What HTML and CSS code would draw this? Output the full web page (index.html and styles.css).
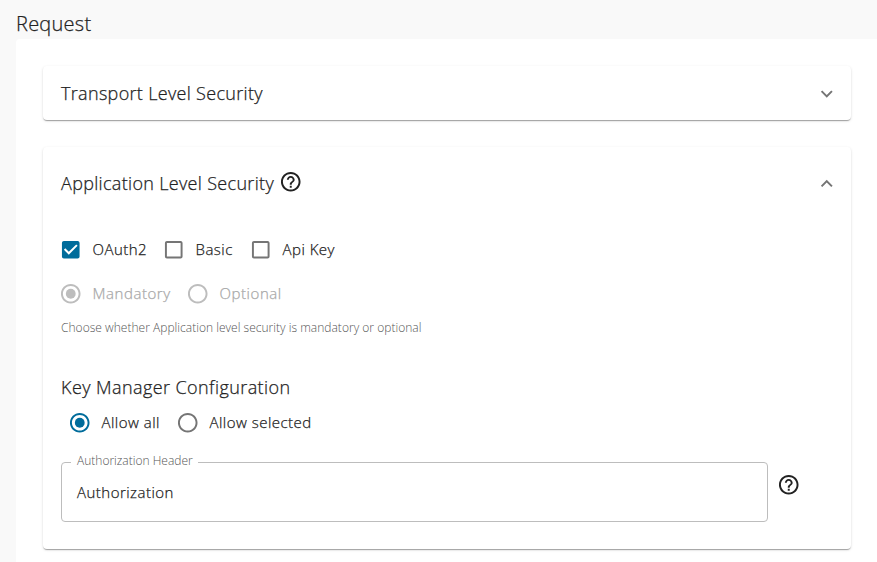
FILE: index.html
```html
<!DOCTYPE html>
<html lang="en">
<head>
<meta charset="utf-8">
<title>Request</title>
<link rel="stylesheet" href="styles.css">
</head>
<body>
<svg class="defs" aria-hidden="true">
  <symbol id="help" viewBox="0 0 24 24"><path d="M11 18h2v-2h-2v2zm1-16C6.480 2 2 6.480 2 12s4.480 10 10 10 10-4.480 10-10S17.520 2 12 2zm0 18c-4.410 0-8-3.590-8-8s3.590-8 8-8 8 3.590 8 8-3.590 8-8 8zm0-14c-2.210 0-4 1.790-4 4h2c0-1.100.9-2 2-2s2 .9 2 2c0 2-3 1.750-3 5h2c0-2.250 3-2.500 3-5 0-2.210-1.790-4-4-4z"/></symbol>
  <symbol id="box" viewBox="0 0 24 24"><path d="M19 5v14H5V5h14m0-2H5c-1.100 0-2 .9-2 2v14c0 1.100.9 2 2 2h14c1.100 0 2-.9 2-2V5c0-1.100-.9-2-2-2z"/></symbol>
  <symbol id="box-on" viewBox="0 0 24 24"><path d="M19 3H5c-1.110 0-2 .9-2 2v14c0 1.100.89 2 2 2h14c1.110 0 2-.9 2-2V5c0-1.100-.89-2-2-2zm-9 14l-5-5 1.410-1.410L10 14.170l7.590-7.590L19 8l-9 9z"/></symbol>
  <symbol id="radio" viewBox="0 0 24 24"><path d="M12 2C6.480 2 2 6.480 2 12s4.480 10 10 10 10-4.480 10-10S17.520 2 12 2zm0 18c-4.420 0-8-3.580-8-8s3.580-8 8-8 8 3.580 8 8-3.580 8-8 8z"/></symbol>
  <symbol id="dot" viewBox="0 0 24 24"><circle cx="12" cy="12" r="5"/></symbol>
  <symbol id="chevron" viewBox="0 0 24 24"><path d="M16.590 8.590L12 13.170 7.410 8.590 6 10l6 6 6-6z"/></symbol>
</svg>
<h1 class="title">Request</h1>
<main class="paper">
  <section class="panel">
    <header class="summary">
      <h2 class="heading">Transport Level Security</h2>
      <svg class="icon chevron"><use href="#chevron"/></svg>
    </header>
  </section>
  <section class="panel open">
    <header class="summary">
      <h2 class="heading">Application Level Security</h2>
      <svg class="icon help"><use href="#help"/></svg>
      <svg class="icon chevron up"><use href="#chevron"/></svg>
    </header>
    <div class="row checks">
      <label class="option oauth"><svg class="icon on"><use href="#box-on"/></svg><span>OAuth2</span></label>
      <label class="option basic"><svg class="icon"><use href="#box"/></svg><span>Basic</span></label>
      <label class="option"><svg class="icon"><use href="#box"/></svg><span>Api Key</span></label>
    </div>
    <div class="row required disabled">
      <label class="option mandatory"><svg class="icon"><use href="#radio"/><use href="#dot"/></svg><span>Mandatory</span></label>
      <label class="option"><svg class="icon"><use href="#radio"/></svg><span>Optional</span></label>
    </div>
    <p class="hint">Choose whether Application level security is mandatory or optional</p>
    <h2 class="heading km">Key Manager Configuration</h2>
    <div class="row managers">
      <label class="option all"><svg class="icon on"><use href="#radio"/><use href="#dot"/></svg><span>Allow all</span></label>
      <label class="option"><svg class="icon"><use href="#radio"/></svg><span>Allow selected</span></label>
    </div>
    <div class="field-row">
      <fieldset class="field">
        <legend>Authorization Header</legend>
        <div class="value">Authorization</div>
      </fieldset>
      <svg class="icon help"><use href="#help"/></svg>
    </div>
  </section>
</main>
</body>
</html>
```
FILE: styles.css
```css
* { box-sizing: border-box; }
html, body { height: 100%; }
body {
  margin: 0;
  display: flex;
  flex-direction: column;
  overflow: hidden;
  background: #f9f9f9;
  color: #222;
  font: 300 15px/24px "Open Sans", sans-serif;
  letter-spacing: .48px;
  -webkit-text-stroke: .25px currentColor;
}
.defs { display: none; }
h1, h2, p { margin: 0; font-weight: 300; }
.title { flex: none; height: 39px; padding: 8px 0 0 16px; font-size: 20px; line-height: 32px; letter-spacing: .25px; }
.paper { flex: 1; margin-left: 16px; padding: 27px 26px 0 27px; background: #fff; border-radius: 4px 0 0 0; }
.panel {
  height: 54px;
  padding: 0 18px;
  background: #fff;
  border-radius: 4px;
  box-shadow: 0 2px 1px -1px rgba(0,0,0,.2), 0 1px 1px 0 rgba(0,0,0,.14), 0 1px 3px 0 rgba(0,0,0,.12);
}
.panel.open { height: 402px; margin-top: 27px; padding-top: 9px; }
.summary { height: 54px; display: flex; align-items: center; }
.heading { font-size: 18px; line-height: 28px; letter-spacing: .32px; white-space: nowrap; }
.icon { display: block; flex: none; width: 23.500px; height: 23.500px; fill: #757575; -webkit-text-stroke: 0; }
.icon.on { fill: #006c9b; }
.icon.help { fill: #222; }
.summary .help { margin: -3px 0 0 5px; }
.chevron { margin-left: auto; margin-right: -5px; }
.up { transform: rotate(180deg); }
.summary .chevron { margin-top: 1px; }
.row { display: flex; align-items: center; height: 24px; margin-left: -2px; }
.option { display: flex; align-items: center; gap: 10px; white-space: nowrap; }
.option span { margin-top: -2px; }
.checks { margin-top: 28px; }
.required { margin-top: 20px; letter-spacing: .56px; }
.oauth { width: 103px; }
.basic { width: 87px; }
.mandatory { width: 127px; }
.disabled { color: #a8a8a8; }
.disabled .icon { fill: #bdbdbd; }
.hint { margin-top: 12px; font-size: 12px; line-height: 20px; letter-spacing: .02px; color: #555; white-space: nowrap; -webkit-text-stroke: 0; }
.km { margin-top: 35px; letter-spacing: .42px; }
.managers { margin: 10px 0 0 7px; }
.all { width: 108px; }
.field-row { display: flex; margin-top: 17px; }
.field { width: 707px; height: 70px; margin: 0; padding: 0 15px; border: 1px solid #bdbdbd; border-radius: 4px; min-width: 0; }
.field legend { height: 20px; margin-left: -6px; padding: 0 5px 0 6px; font-size: 12px; line-height: 18px; letter-spacing: 0; color: #555; -webkit-text-stroke: 0; }
.value { line-height: 24px; margin-top: 8px; }
.field-row .help { margin: 21px 0 0 9px; }
```
